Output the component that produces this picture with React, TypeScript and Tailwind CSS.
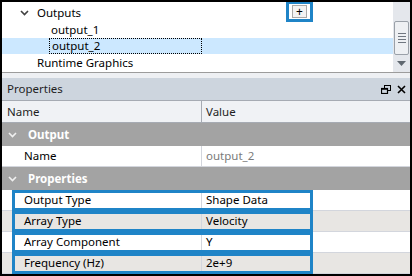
import React from 'react';

const font = { fontFamily: '"Noto Sans", "Open Sans", sans-serif' };

const Chevron: React.FC<{ color: string }> = ({ color }) => (
  <svg width="9" height="6" viewBox="0 0 9 6">
    <polyline points="1,1 4.5,4.5 8,1" fill="none" stroke={color} strokeWidth="1.6" />
  </svg>
);

const PropRow: React.FC<{ name: string; value: string; alt?: boolean; boxed?: boolean; muted?: boolean }> = ({
  name,
  value,
  alt,
  boxed,
  muted,
}) => (
  <div className={`relative flex h-[21px] shrink-0 border-b border-[#d3d6dd] ${alt ? 'bg-[#e8e6e3]' : 'bg-white'}`}>
    <div className="w-[200px] pl-[22px] flex items-center border-r border-[#d3d6dd]">{name}</div>
    <div className={`flex-1 pl-[4px] flex items-center ${muted ? 'text-[#7a7a7a]' : 'text-black'}`}>{value}</div>
    {boxed && <div className="absolute left-[10px] top-0 bottom-[-1px] w-[301px] border-[3px] border-[#1f84c7]" />}
  </div>
);

const App: React.FC = () => {
  return (
    <div className="w-[412px] h-[276px] border-2 border-black bg-white flex flex-col overflow-hidden text-[11.5px] text-black" style={font}>
      {/* Tree */}
      <div className="flex h-[70px] shrink-0">
        <div className="relative flex-1 pt-[3px]">
          <div className="flex items-center h-[16px] pl-[18px]">
            <Chevron color="#404040" />
            <span className="ml-[8px]">Outputs</span>
          </div>
          <div className="flex items-center h-[17px] pl-[49px]">output_1</div>
          <div className="flex h-[16px] pl-[47px] bg-[#cce8ff]">
            <div className="w-[153px] border border-dotted border-black flex items-center pl-[2px]">output_2</div>
          </div>
          <div className="flex items-center h-[18px] pl-[35px]">Runtime Graphics</div>
          <div className="absolute left-[284px] top-[-1px] w-[27px] h-[21px] border-[3px] border-[#1f84c7] flex items-center justify-center">
            <div className="w-[15px] h-[13px] bg-[#f3f3f3] border border-[#a8a8a8] flex items-center justify-center text-[12px] leading-none">+</div>
          </div>
        </div>
        {/* Scrollbar */}
        <div className="relative w-[17px] bg-[#e4e7ec] flex flex-col items-center">
          <div className="mt-[19px] w-[15px] h-[34px] bg-[#eef0f3] border border-[#9aa0a8] rounded-[2px] flex flex-col items-center justify-center gap-[2px]">
            <div className="w-[8px] h-px bg-[#707780]" />
            <div className="w-[8px] h-px bg-[#707780]" />
            <div className="w-[8px] h-px bg-[#707780]" />
            <div className="w-[8px] h-px bg-[#707780]" />
          </div>
          <svg className="mt-[6px]" width="9" height="5" viewBox="0 0 9 5">
            <polygon points="0,0 9,0 4.5,5" fill="#606870" />
          </svg>
        </div>
      </div>
      <div className="h-px shrink-0 bg-[#9c9c9c]" />
      <div className="h-[5px] shrink-0 bg-[#eef0f3]" />

      {/* Properties header */}
      <div className="h-[22px] shrink-0 bg-[#cdd5de] flex items-center justify-between pl-[5px] pr-[4px] text-[#1e1e1e]">
        <span>Properties</span>
        <div className="flex items-center gap-[6px]">
          <svg width="10" height="9" viewBox="0 0 10 9">
            <rect x="3.5" y="0.5" width="6" height="5" fill="none" stroke="#000" strokeWidth="1" />
            <rect x="0.5" y="3.5" width="6" height="5" fill="#cdd5de" stroke="#000" strokeWidth="1.2" />
            <line x1="0.5" y1="4" x2="6.5" y2="4" stroke="#000" strokeWidth="1.5" />
          </svg>
          <svg width="9" height="9" viewBox="0 0 9 9">
            <path d="M1 1 L8 8 M8 1 L1 8" stroke="#000" strokeWidth="1.6" />
          </svg>
        </div>
      </div>
      <div className="h-px shrink-0 bg-[#a6abb3]" />

      {/* Column headers */}
      <div className="flex h-[22px] shrink-0 bg-[#f0f2f5] border-b border-[#a6abb3] text-[#1e1e1e]">
        <div className="w-[200px] pl-[5px] flex items-center border-r border-[#a6abb3]">Name</div>
        <div className="flex-1 pl-[4px] flex items-center">Value</div>
      </div>

      {/* Output group */}
      <div className="h-[23px] shrink-0 bg-[#a3a3a3] flex items-center pl-[6px] text-white font-bold">
        <Chevron color="#f0f0f0" />
        <span className="ml-[11px]">Output</span>
      </div>
      <PropRow name="Name" value="output_2" muted />

      {/* Properties group */}
      <div className="h-[23px] shrink-0 bg-[#a3a3a3] flex items-center pl-[6px] text-white font-bold">
        <Chevron color="#f0f0f0" />
        <span className="ml-[11px]">Properties</span>
      </div>
      <PropRow name="Output Type" value="Shape Data" boxed />
      <PropRow name="Array Type" value="Velocity" alt boxed />
      <PropRow name="Array Component" value="Y" boxed />
      <PropRow name="Frequency (Hz)" value="2e+9" alt boxed />
    </div>
  );
};

export default App;
